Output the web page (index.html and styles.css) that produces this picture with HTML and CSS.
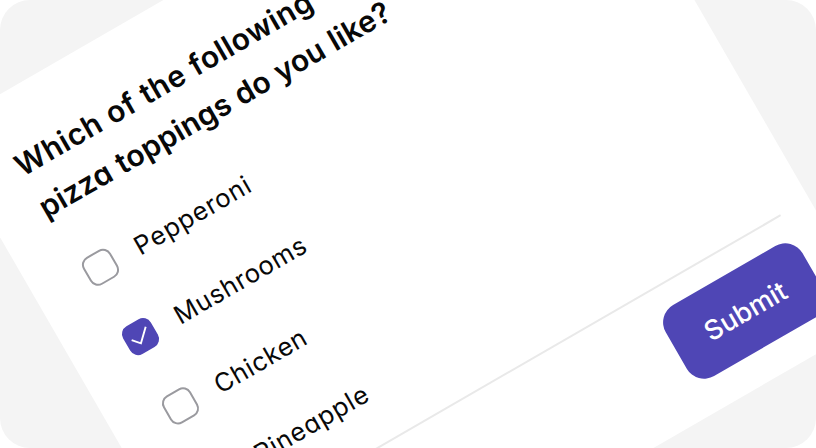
FILE: index.html
```html
<!DOCTYPE html>
<html lang="en">
<head>
<meta charset="utf-8">
<title>Pizza survey</title>
<link rel="stylesheet" href="styles.css">
</head>
<body>
<main class="stage">
  <form class="card">
    <h1 class="title"><span class="line line-one">Which of the following</span><span class="line line-two">pizza toppings do you like?</span></h1>
    <div class="options">
      <div class="option"><span class="box"></span><span class="label pepperoni">Pepperoni</span></div>
      <div class="option"><span class="box checked"><svg class="tick" viewBox="-16 -16 32 32"><path d="M-9.4-1.4-3 6.1 9.4-5.9"/></svg></span><span class="label">Mushrooms</span></div>
      <div class="option"><span class="box"></span><span class="label">Chicken</span></div>
      <div class="option"><span class="box"></span><span class="label pineapple">Pineapple</span></div>
    </div>
    <div class="footer">
      <button class="submit" type="button">Submit</button>
    </div>
  </form>
</main>
</body>
</html>
```
FILE: styles.css
```css
* { box-sizing: border-box; }
body { margin: 0; background: #fff; font-family: Inter, "Liberation Sans", sans-serif; font-feature-settings: "cv11"; overflow: hidden; }
.stage { width: 816px; height: 448px; overflow: hidden; border-radius: 30px; background: #f4f4f4; }
.card { width: 720.4px; height: 632.8px; padding: 49.3px 33px 0; background: #fff; transform-origin: 0 0; transform: rotate(-30deg) translate(-118.6px, 81.7px); }
.title { margin: 0; height: 110.7px; padding-left: 16.5px; font-size: 30px; font-weight: 600; line-height: 47.5px; color: #080808; }
.line { display: block; white-space: nowrap; }
.line-one { letter-spacing: .55px; word-spacing: .5px; }
.line-two { letter-spacing: .14px; word-spacing: .9px; }
.options { padding-left: 23px; }
.option { display: flex; align-items: center; gap: 24.5px; height: 80px; }
.box { flex: none; width: 32px; height: 32px; border: 2px solid #9a9a9f; border-radius: 9px; }
.checked { border: 0; background: #4f46b5; }
.tick { display: block; width: 32px; height: 32px; fill: none; stroke: #fff; stroke-width: 1.9; }
.label { padding-top: 2px; font-size: 25.5px; line-height: 32px; letter-spacing: .7px; color: #080808; }
.pepperoni, .pineapple { letter-spacing: .88px; }
.footer { display: flex; justify-content: flex-end; margin-top: 14px; padding-top: 22.8px; border-top: 2px solid #e9e9e9; }
.submit { width: 158.5px; height: 82.5px; padding: 0 0 0 1px; border: 0; border-radius: 20px; background: #4f46b5; color: #fff; font: inherit; font-size: 27px; font-weight: 550; letter-spacing: 0; }
```
